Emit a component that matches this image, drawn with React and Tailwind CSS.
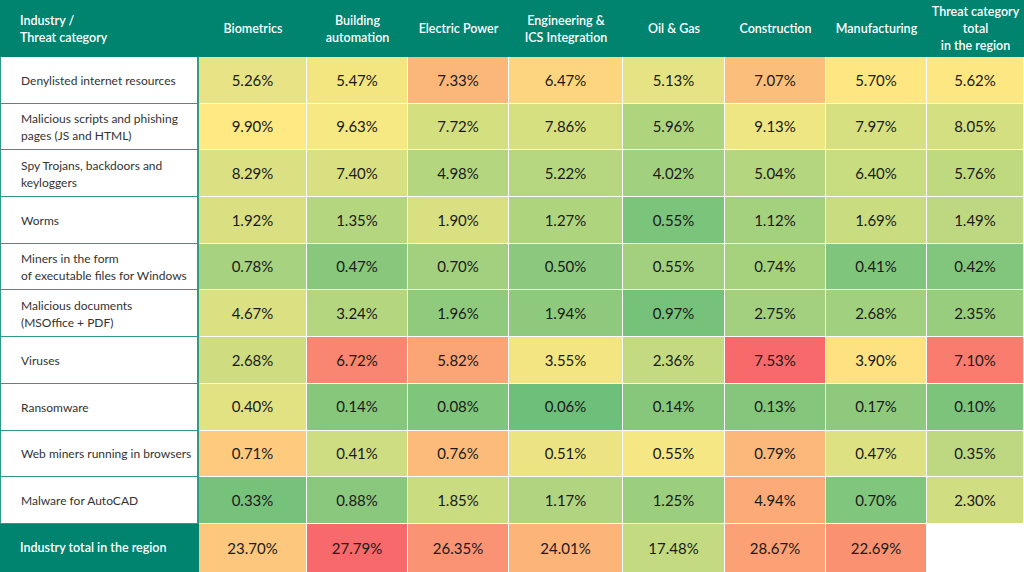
const columns = [
  'Biometrics',
  'Building\nautomation',
  'Electric Power',
  'Engineering &\nICS Integration',
  'Oil & Gas',
  'Construction',
  'Manufacturing',
  'Threat category\ntotal\nin the region',
];

// [label, [value, color] x 8]
const rows = [
  ['Denylisted internet resources', [
    ['5.26%', '#e8e384'], ['5.47%', '#f3e680'], ['7.33%', '#fbb77a'], ['6.47%', '#fdd57f'],
    ['5.13%', '#e5e383'], ['7.07%', '#fcbf7b'], ['5.70%', '#fee782'], ['5.62%', '#fce782'],
  ]],
  ['Malicious scripts and phishing\npages (JS and HTML)', [
    ['9.90%', '#fee983'], ['9.63%', '#f6e882'], ['7.72%', '#d4e080'], ['7.86%', '#d6e080'],
    ['5.96%', '#aed57e'], ['9.13%', '#ede683'], ['7.97%', '#d6e081'], ['8.05%', '#d4df81'],
  ]],
  ['Spy Trojans, backdoors and\nkeyloggers', [
    ['8.29%', '#dbe182'], ['7.40%', '#d9e081'], ['4.98%', '#b3d67e'], ['5.22%', '#b6d77f'],
    ['4.02%', '#a1d17e'], ['5.04%', '#b3d67e'], ['6.40%', '#c8dc80'], ['5.76%', '#bfd97f'],
  ]],
  ['Worms', [
    ['1.92%', '#dadf81'], ['1.35%', '#b4d67f'], ['1.90%', '#d9e081'], ['1.27%', '#afd47e'],
    ['0.55%', '#7bc47c'], ['1.12%', '#a4d17e'], ['1.69%', '#c9dc80'], ['1.49%', '#bdd880'],
  ]],
  ['Miners in the form\nof executable files for Windows', [
    ['0.78%', '#a7d27f'], ['0.47%', '#88c77c'], ['0.70%', '#a2d07e'], ['0.50%', '#8cc87d'],
    ['0.55%', '#a3d07e'], ['0.74%', '#a6d27e'], ['0.41%', '#80c57c'], ['0.42%', '#82c57c'],
  ]],
  ['Malicious documents\n(MSOffice + PDF)', [
    ['4.67%', '#dbe082'], ['3.24%', '#b4d67f'], ['1.96%', '#90ca7d'], ['1.94%', '#8fc97d'],
    ['0.97%', '#77c27b'], ['2.75%', '#a2d07e'], ['2.68%', '#a1d07e'], ['2.35%', '#98cd7d'],
  ]],
  ['Viruses', [
    ['2.68%', '#cfdd80'], ['6.72%', '#f98670'], ['5.82%', '#fba476'], ['3.55%', '#f3e582'],
    ['2.36%', '#c4da80'], ['7.53%', '#f8696b'], ['3.90%', '#fee282'], ['7.10%', '#f97c6f'],
  ]],
  ['Ransomware', [
    ['0.40%', '#e2e283'], ['0.14%', '#87c77c'], ['0.08%', '#80c57c'], ['0.06%', '#6dbf7a'],
    ['0.14%', '#87c77c'], ['0.13%', '#85c67c'], ['0.17%', '#8ec97d'], ['0.10%', '#7cc47b'],
  ]],
  ['Web miners running in browsers', [
    ['0.71%', '#fdca7e'], ['0.41%', '#cedd81'], ['0.76%', '#fcbb7a'], ['0.51%', '#ece483'],
    ['0.55%', '#f5e783'], ['0.79%', '#fcb77a'], ['0.47%', '#dee182'], ['0.35%', '#bdd880'],
  ]],
  ['Malware for AutoCAD', [
    ['0.33%', '#76c27b'], ['0.88%', '#8ac87d'], ['1.85%', '#c9dc80'], ['1.17%', '#b0d47f'],
    ['1.25%', '#9ccf7d'], ['4.94%', '#fcaa77'], ['0.70%', '#80c67c'], ['2.30%', '#d0dd81'],
  ]],
];

const totals = [
  ['23.70%', '#fdc87d'], ['27.79%', '#f8696b'], ['26.35%', '#fa9373'], ['24.01%', '#fcb479'],
  ['17.48%', '#c3da80'], ['28.67%', '#fca175'], ['22.69%', '#fa9272'], ['', '#ffffff'],
];

const Lines = ({ text }) =>
  text.split('\n').map((line, i) => <div key={i}>{line}</div>);

export default function App() {
  return (
    <div
      className="w-[1024px] h-[572px] bg-white overflow-hidden"
      style={{ fontFamily: 'Lato, "Open Sans", sans-serif' }}
    >
      <div className="grid grid-cols-[199px_108px_101px_101px_114px_102px_101px_101px_97px] grid-rows-[57px_repeat(10,46.7px)_48px]">
        {/* Header */}
        <div className="bg-[#00836f] text-white text-[12.5px] font-semibold leading-[17px] flex flex-col justify-center pl-5">
          <Lines text={'Industry /\nThreat category'} />
        </div>
        {columns.map((c) => (
          <div
            key={c}
            className="bg-[#00836f] text-white text-[12.5px] font-semibold leading-[17px] flex flex-col justify-center items-center text-center"
          >
            <Lines text={c} />
          </div>
        ))}

        {/* Body */}
        {rows.map(([label, cells]) => (
          <>
            <div
              key={label}
              className="bg-white border-l border-r-2 border-b border-[#2f9a88] text-[#333] text-[12px] leading-[17px] whitespace-nowrap flex flex-col justify-center pl-5 pt-px"
            >
              <Lines text={label} />
            </div>
            {cells.map(([v, color], i) => (
              <div
                key={label + i}
                className="border-r border-b border-white flex items-center justify-center text-[15px] text-[#1a1a1a]"
                style={{ backgroundColor: color }}
              >
                {v}
              </div>
            ))}
          </>
        ))}

        {/* Totals */}
        <div className="bg-[#00836f] text-white text-[12.5px] font-semibold flex items-center pl-5">
          Industry total in the region
        </div>
        {totals.map(([v, color], i) => (
          <div
            key={'t' + i}
            className="border-r border-white flex items-center justify-center text-[15px] text-[#1a1a1a]"
            style={{ backgroundColor: color }}
          >
            {v}
          </div>
        ))}
      </div>
    </div>
  );
}
